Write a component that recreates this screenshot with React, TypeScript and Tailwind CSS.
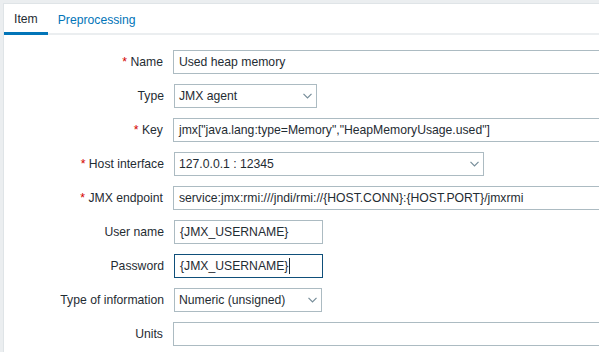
const Chevron = () => (
  <svg width="9" height="6" viewBox="0 0 9 6" className="shrink-0">
    <path d="M0.5 0.8 L4.5 4.8 L8.5 0.8" fill="none" stroke="#768d99" strokeWidth="1.2" />
  </svg>
);

type Row = {
  label: string;
  required?: boolean;
  kind: 'input' | 'select';
  value: string;
  width: string;
  focused?: boolean;
};

const rows: Row[] = [
  { label: 'Name', required: true, kind: 'input', value: 'Used heap memory', width: 'w-[453px]' },
  { label: 'Type', kind: 'select', value: 'JMX agent', width: 'w-[143px]' },
  { label: 'Key', required: true, kind: 'input', value: 'jmx["java.lang:type=Memory","HeapMemoryUsage.used"]', width: 'w-[453px]' },
  { label: 'Host interface', required: true, kind: 'select', value: '127.0.0.1 : 12345', width: 'w-[310px]' },
  { label: 'JMX endpoint', required: true, kind: 'input', value: 'service:jmx:rmi:///jndi/rmi://{HOST.CONN}:{HOST.PORT}/jmxrmi', width: 'w-[453px]' },
  { label: 'User name', kind: 'input', value: '{JMX_USERNAME}', width: 'w-[149px]' },
  { label: 'Password', kind: 'input', value: '{JMX_USERNAME}', width: 'w-[149px]', focused: true },
  { label: 'Type of information', kind: 'select', value: 'Numeric (unsigned)', width: 'w-[148px]' },
  { label: 'Units', kind: 'input', value: '', width: 'w-[453px]' },
];

export default function App() {
  return (
    <div
      className="w-[599px] h-[352px] overflow-hidden bg-[#ebeef0] pt-[3px] pl-[3px] text-[12.2px] text-[#1f2c33]"
      style={{ fontFamily: '"Liberation Sans", Arial, sans-serif' }}
    >
      <div className="h-full w-[620px] bg-white border-l border-t border-[#dfe4e7]">
        {/* Tabs */}
        <ul className="flex h-[31px] border-b-2 border-[#ebeef0]">
          <li className="h-[31px] px-[10px] flex items-center border-b-[3px] border-[#0275b8] -mb-[2px] pt-[2px]">
            Item
          </li>
          <li className="h-[31px] px-[10px] flex items-center text-[#0275b8] pt-[2px]">Preprocessing</li>
        </ul>

        {/* Form */}
        <div className="flex flex-col gap-[10px] pt-[15px]">
          {rows.map((row) => (
            <div key={row.label} className="flex items-center h-[24px]">
              <div className="w-[160px] text-right whitespace-nowrap">
                {row.required && <span className="text-[#d40000]">* </span>}
                {row.label}
              </div>
              <div
                className={`ml-[10px] h-[24px] ${row.width} flex items-center justify-between bg-white border ${
                  row.focused ? 'border-[#0f4f7a]' : 'border-[#acbbc2]'
                } ${row.kind === 'select' ? 'pl-[4px] pr-[4px]' : 'pl-[5px]'}`}
              >
                <span className="whitespace-nowrap flex items-center">
                  {row.value}
                  {row.focused && <span className="inline-block w-px h-[16px] bg-[#1f2c33] ml-px" />}
                </span>
                {row.kind === 'select' && <Chevron />}
              </div>
            </div>
          ))}
        </div>
      </div>
    </div>
  );
}
